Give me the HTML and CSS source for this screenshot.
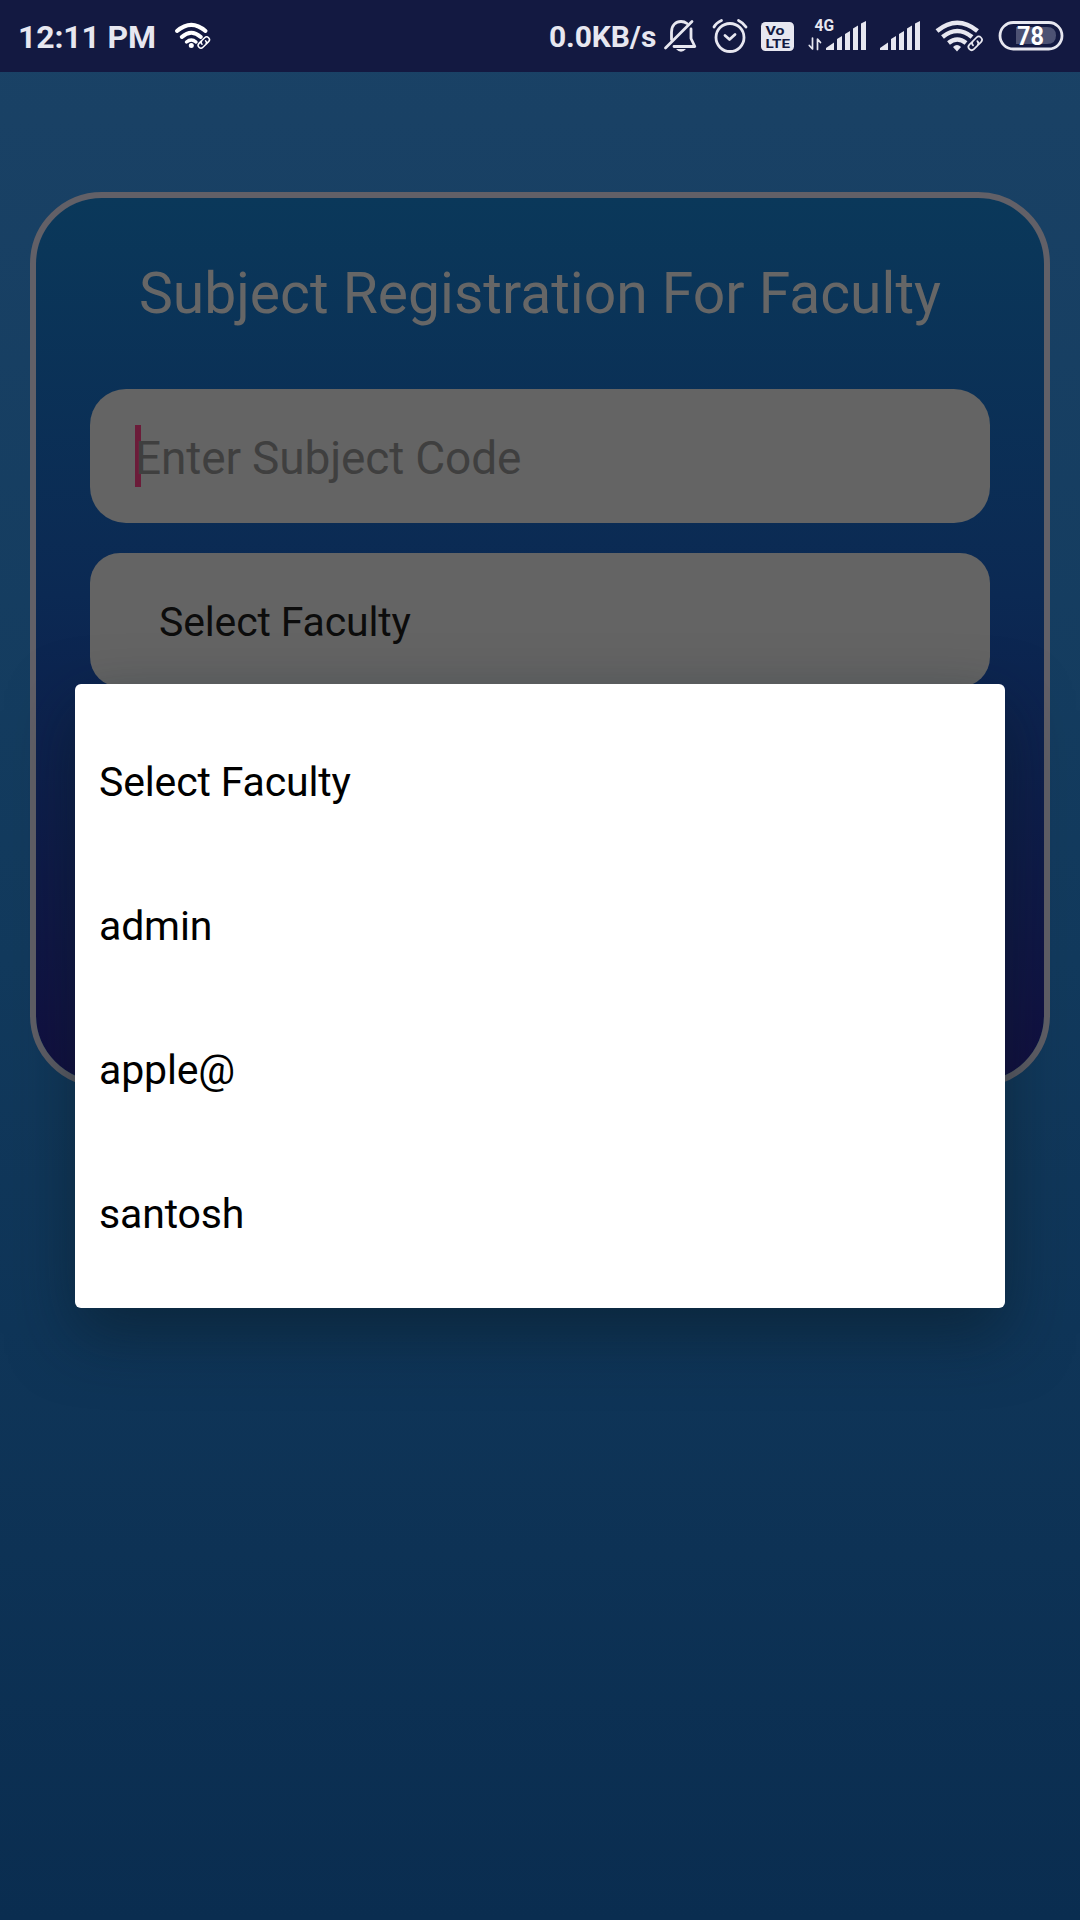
FILE: index.html
```html
<!DOCTYPE html>
<html lang="en">
<head>
<meta charset="utf-8">
<title>Subject Registration</title>
<link rel="stylesheet" href="styles.css">
</head>
<body>
<div class="screen">
  <header class="status">
    <span class="clock">12:11 PM</span>
    <svg class="icon hotspot" width="40" height="72" viewBox="173 0 40 72">
      <g class="line" stroke-width="4">
        <path d="M177 31Q191.300 18.700 205.500 31"/>
        <path d="M181.800 37Q191.300 28.500 200.800 37"/>
        <path d="M186.500 42Q191.300 38 196 42" stroke-width="3.400"/>
      </g>
      <circle class="solid" cx="191.300" cy="45.600" r="2.500"/>
      <g class="line link" stroke-width="1.500" transform="translate(203.800 42.500) rotate(-45)">
        <path d="M-.5-2.800H-4A2.800 2.800 0 0 0-4 2.800H0A2.800 2.800 0 0 0 2.500 0M.5 2.800H4A2.800 2.800 0 0 0 4-2.800H0A2.800 2.800 0 0 0-2.500 0"/>
      </g>
    </svg>
    <span class="speed">0.0KB/s</span>
    <svg class="icon" width="48" height="72" viewBox="660 0 48 72">
      <g class="line" stroke-width="2.800">
        <path d="M665.500 48 692 21.500"/>
        <path d="M671.500 39.500V32C671.500 25 676 21.500 681 21.500Q684.500 21.500 687 23.500M691 29V38.500L694.800 46.500H674"/>
      </g>
      <path class="solid" d="M676 49H686Q681 54.500 676 49Z"/>
    </svg>
    <svg class="icon" width="46" height="72" viewBox="708 0 46 72">
      <g class="line" stroke-width="2.800">
        <circle cx="730" cy="37.500" r="14"/>
        <path d="M725 35.500 729.500 39.500 735 34.500M714 27Q716 23 721.500 20.500M738.500 20.500Q743.500 23 746 27"/>
      </g>
    </svg>
    <svg class="icon" width="48" height="72" viewBox="754 0 48 72">
      <rect class="solid" x="761" y="22" width="33" height="29" rx="4.500"/>
      <g class="volte"><text x="765.500" y="34.500" textLength="19" lengthAdjust="spacingAndGlyphs">Vo</text><text x="765.500" y="47.500" textLength="24.500" lengthAdjust="spacingAndGlyphs">LTE</text></g>
    </svg>
    <svg class="icon" width="72" height="72" viewBox="802 0 72 72">
      <text class="net" x="814.500" y="31" textLength="19.500" lengthAdjust="spacingAndGlyphs">4G</text>
      <path class="line" stroke-width="1.700" d="M812.500 38V49L809.300 45.500M817.500 49.500V39L820.500 42.500"/>
      <path class="solid" d="M826 50V48L834 42.500V50ZM837 50V39L842 36V50ZM845 50V34L850 31V50ZM853 50V28.500L858 25.500V50ZM861 50V23.500L866 21V50Z"/>
    </svg>
    <svg class="icon" width="56" height="72" viewBox="874 0 56 72">
      <path class="solid" d="M880 50V48L888 42.500V50ZM891 50V39L896 36V50ZM899 50V34L904 31V50ZM907 50V28.500L912 25.500V50ZM915 50V23.500L920 21V50Z"/>
    </svg>
    <svg class="icon" width="62" height="72" viewBox="930 0 62 72">
      <g class="line arcs" stroke-width="4.500">
        <path d="M937 31Q957.300 14.500 977.500 31"/>
        <path d="M942.500 37Q957.300 25 972 37"/>
        <path d="M948.500 43Q957.300 36 966 43"/>
      </g>
      <path class="solid" d="M953 47Q957 43 961 47L957 51.500Z"/>
      <g class="line" stroke-width="1.700" transform="translate(975.200 43.300) rotate(-45)">
        <path d="M-1-3.200H-5A3.200 3.200 0 0 0-5 3.200H0A3.200 3.200 0 0 0 3 0M1 3.200H5A3.200 3.200 0 0 0 5-3.200H0A3.200 3.200 0 0 0-3 0"/>
      </g>
    </svg>
    <svg class="icon" width="78" height="72" viewBox="992 0 78 72">
      <rect class="line" stroke-width="2.800" x="1000" y="22.500" width="62" height="26.500" rx="13.250"/>
      <path class="charge" d="M1016 27H1047Q1056 27 1056 35.500T1047 44H1016Z"/>
      <text class="level" x="1017" y="45" textLength="27" lengthAdjust="spacingAndGlyphs">78</text>
    </svg>
  </header>
  <main class="content">
    <section class="card">
      <h1 class="title">Subject Registration For Faculty</h1>
      <div class="field code"><span class="caret"></span><span class="hint">Enter Subject Code</span></div>
      <div class="field faculty">Select Faculty</div>
    </section>
  </main>
  <ul class="menu">
    <li>Select Faculty</li>
    <li>admin</li>
    <li>apple@</li>
    <li>santosh</li>
  </ul>
</div>
</body>
</html>
```
FILE: styles.css
```css
* { box-sizing: border-box; }
body { margin: 0; font-family: Roboto, sans-serif; }
.screen {
  position: relative;
  display: flex;
  flex-direction: column;
  width: 1080px;
  height: 1920px;
  overflow: hidden;
  background: linear-gradient(#1a4266, #123a5d 50%, #0a2d50);
}
.status {
  display: flex;
  align-items: center;
  flex: none;
  height: 72px;
  padding-left: 18px;
  background: #131941;
  color: #e7e7f0;
  font-weight: 700;
  white-space: nowrap;
}
.clock { width: 155px; font-size: 32px; letter-spacing: -.15px; padding-top: 1px; }
.speed { width: 111px; margin-left: 336px; font-size: 30px; letter-spacing: -.1px; }
.icon { flex: none; display: block; }
.line { fill: none; stroke: #e7e7f0; stroke-linecap: round; stroke-linejoin: round; }
.arcs { stroke-linecap: butt; }
.solid { fill: #e7e7f0; }
.hotspot .line { stroke: #fff; }
.hotspot .solid { fill: #fff; }
.volte { fill: #131941; font-size: 13.5px; font-weight: 700; }
.net { fill: #e7e7f0; font-size: 16px; }
.charge { fill: #4d5273; }
.level { fill: #fff; font-size: 26px; }

.content { padding: 120px 30px 0; }
.card {
  height: 895px;
  padding: 0 54px;
  border: 6px solid #626067;
  border-radius: 72px;
  background: linear-gradient(#0a385a, #0b2953 45%, #120e40) padding-box;
}
.title {
  margin: 0;
  padding-top: 60px;
  height: 191px;
  color: #666;
  font-size: 57px;
  font-weight: 400;
  line-height: 72px;
  text-align: center;
  white-space: nowrap;
}
.field {
  display: flex;
  align-items: center;
  height: 134px;
  background: #646464;
}
.code { padding: 3px 0 0 45px; border-radius: 36px; font-size: 46px; letter-spacing: -.15px; color: #3f3f3f; }
.caret { width: 6px; height: 62px; margin-right: -6px; margin-top: -3px; background: #6b1c39; }
.hint { position: relative; }
.faculty { margin-top: 30px; padding: 3px 0 0 69px; border-radius: 30px; font-size: 41px; letter-spacing: -.15px; color: #0c0c0c; }

.menu {
  position: absolute;
  left: 75px;
  top: 684px;
  width: 930px;
  margin: 0;
  padding: 24px 0;
  list-style: none;
  background: #fff;
  border-radius: 6px;
  box-shadow: 0 26px 64px rgba(10, 28, 38, .55);
}
.menu li {
  height: 144px;
  padding: 4px 24px 0;
  color: #000;
  font-size: 41px;
  letter-spacing: -.15px;
  line-height: 140px;
}
```
